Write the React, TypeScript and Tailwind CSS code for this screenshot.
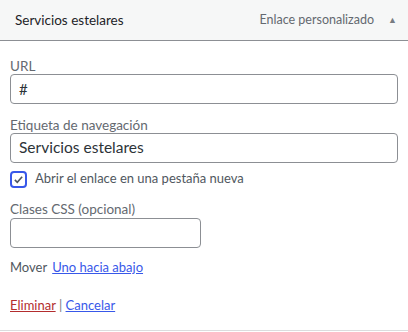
export default function App() {
  return (
    <div className="h-[332px] w-[408px] bg-white text-[14px] text-[#3c434a]" style={{ fontFamily: 'Lato, "Noto Sans", sans-serif' }}>
      <div className="flex h-[41px] items-center border-b border-[#8c8f94] bg-[#f6f7f7] pl-[15px] pr-[11px]">
        <span className="flex-1 text-[13.5px] text-[#1d2327]">Servicios estelares</span>
        <span className="text-[12.5px] text-[#646970]">Enlace personalizado</span>
        <span className="ml-[14px] text-[9px] text-[#787c82]">▲</span>
      </div>

      <div className="flex flex-col px-[10px] pt-[17px]">
        <label className="text-[13.5px] leading-[16px] text-[#646970]">URL</label>
        <div className="flex h-[30px] items-center rounded-[4px] border border-[#8c8f94] px-[8px] text-[15px] text-[#2c3338]">#</div>

        <label className="mt-[13px] text-[13.5px] leading-[16px] text-[#646970]">Etiqueta de navegación</label>
        <div className="flex h-[30px] items-center rounded-[4px] border border-[#8c8f94] px-[8px] text-[15.5px] text-[#2c3338]">Servicios estelares</div>

        <div className="mt-[7px] flex h-[18px] items-center gap-[8px]">
          <span className="flex h-[17px] w-[17px] items-center justify-center rounded-[4px] border-2 border-[#3858e9]">
            <svg viewBox="0 0 16 16" className="h-[13px] w-[13px]">
              <path d="M3.5 8.5l3 3 6-7" fill="none" stroke="#50575e" strokeWidth="2" />
            </svg>
          </span>
          <span className="text-[13px] text-[#50575e]">Abrir el enlace en una pestaña nueva</span>
        </div>

        <label className="mt-[13px] text-[13.5px] leading-[16px] text-[#646970]">Clases CSS (opcional)</label>
        <div className="mt-[1px] h-[30px] w-[191px] rounded-[4px] border border-[#8c8f94]" />

        <div className="mt-[12px] flex h-[16px] items-center gap-[5px] text-[13px]">
          <span className="text-[#50575e]">Mover</span>
          <a className="text-[#3858e9] underline">Uno hacia abajo</a>
        </div>

        <div className="mt-[21px] h-[16px] text-[13px] leading-[16px] text-[#787c82]">
          <a className="text-[#b32d2e] underline">Eliminar</a> | <a className="text-[#3858e9] underline">Cancelar</a>
        </div>
      </div>
      <div className="mt-[17px] border-b border-[#dcdcde]" />
    </div>
  );
}
